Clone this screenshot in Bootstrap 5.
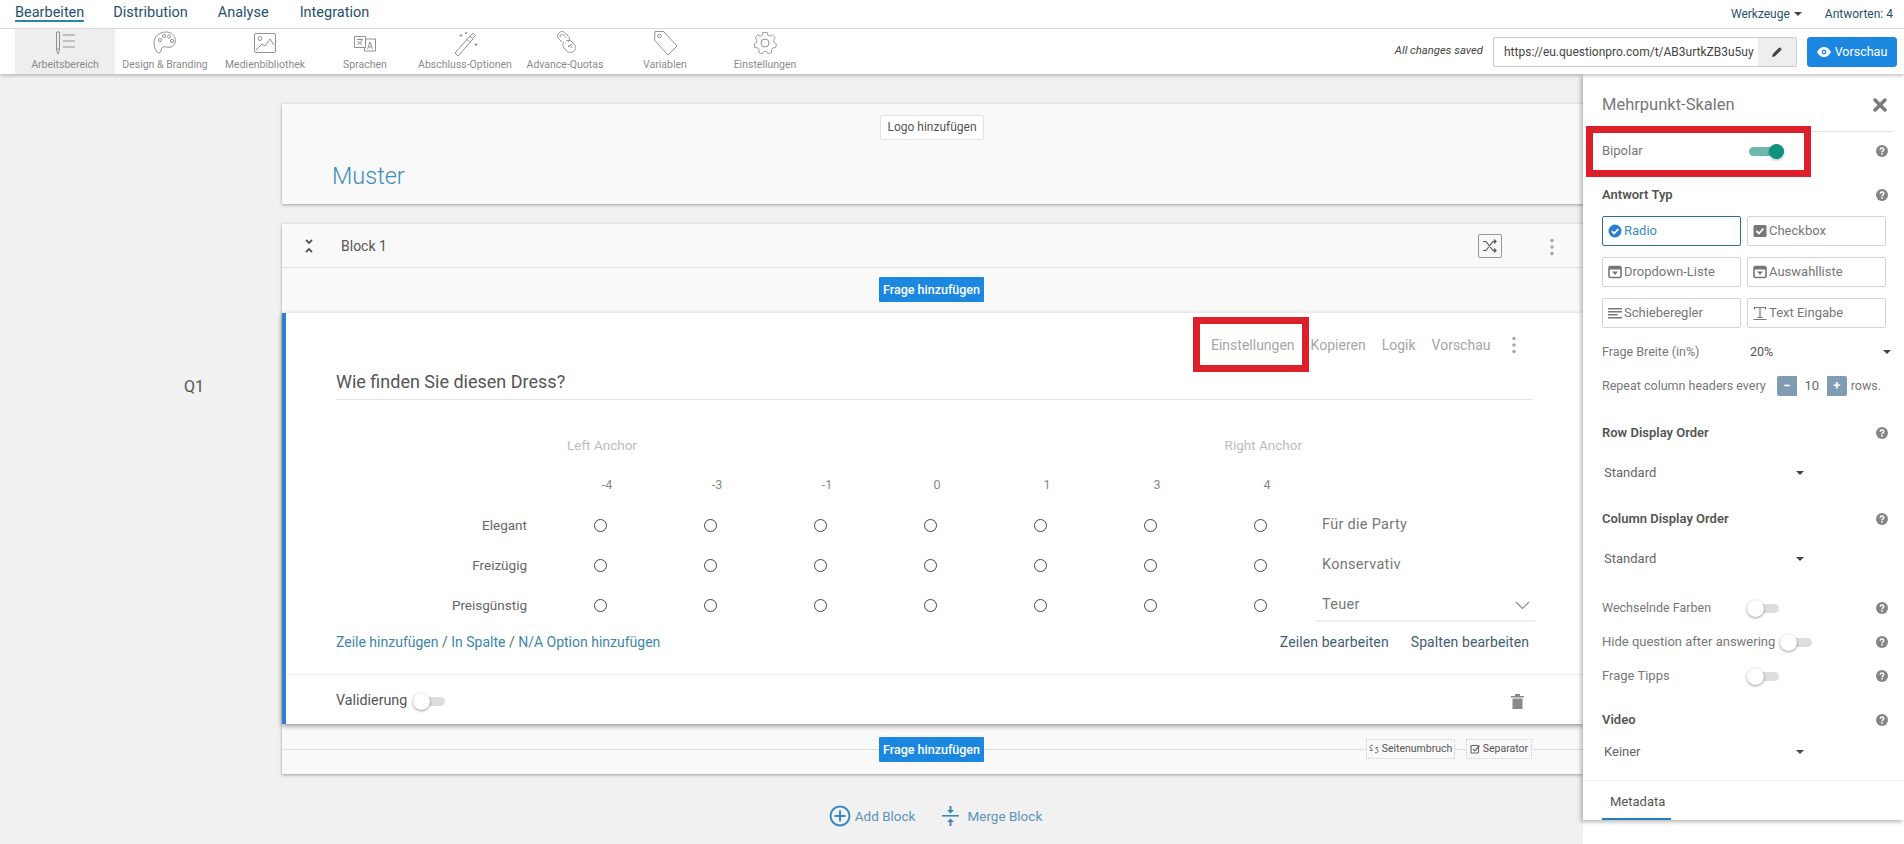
<!DOCTYPE html>
<html lang="de">
<head>
    <meta charset="UTF-8">
    <meta name="viewport" content="width=device-width, initial-scale=1.0">
    <title>Mehrpunkt-Skalen</title>
    <link rel="stylesheet" href="https://cdn.jsdelivr.net/npm/bootstrap@5.3.0/dist/css/bootstrap.min.css">
    <style>
        body {
            font-family: Roboto, "Liberation Sans", sans-serif;
            font-size: 14px;
            color: #555;
            background: #f1f1f1;
            height: 844px;
            overflow: hidden;
        }
        a { text-decoration: none; }

        /* top bars */
        .top-tabs { height: 29px; background: #fff; border-bottom: 1px solid #ddd; padding: 0 11px 0 15px; position: relative; z-index: 3; }
        .top-tabs a { color: #28506e; font-size: 14.5px; line-height: 25px; height: 22px; display: block; }
        .top-tabs .tab-on { border-bottom: 2px solid #2a86a8; }
        .tab-gap-a { margin-left: 29px; }
        .tab-gap-b { margin-left: 30px; }
        .tab-gap-c { margin-left: 31px; }
        .top-tabs .tools { font-size: 12px; color: #28506e; height: 27px; }
        .tools-count { margin-left: 23px; }
        .tool-strip { height: 45px; background: #fff; padding: 0 7px 0 15px; box-shadow: 0 2px 3px rgba(0,0,0,.22); position: relative; z-index: 3; }
        .tool-item { width: 100px; height: 45px; text-align: center; color: #8b8b8b; font-size: 10.5px; }
        .tool-item svg { display: block; margin: 0 auto; height: 28px; width: 32px; fill: none; stroke: #929292; stroke-width: 1; }
        .tool-on { background: #eee; }
        .saved-note { font-size: 11.3px; font-style: italic; color: #444; margin-right: 10px; }
        .url-box { width: 304px; height: 30px; border: 1px solid #ccc; border-radius: 2px; margin-right: 10px; font-size: 12px; color: #444; background: #fff; overflow: hidden; }
        .url-box .url-text { width: 265px; padding-left: 10px; white-space: nowrap; overflow: hidden; }
        .url-box .url-pen { width: 38px; height: 100%; background: #eee; }
        .preview-btn { width: 90px; height: 30px; padding: 0; font-size: 12.5px; line-height: 28px; border-radius: 3px; background: #1c87df; border-color: #1c87df; }

        /* canvas */
        .work-row { height: 771px; }
        .canvas { width: 1583px; flex: none; }
        .gutter { width: 282px; flex: none; padding-top: 302px; padding-left: 184px; font-size: 16px; color: #555; line-height: 22px; }
        .cards { width: 1301px; flex: none; padding-top: 30px; }
        .head-card { height: 100px; background: #f9f9f9; box-shadow: 0 1px 3px rgba(0,0,0,.35); padding-top: 11px; margin-bottom: 20px; }
        .logo-btn { display: block; width: 104px; height: 25px; padding: 0; margin-left: 598px; background: #fff; border: 1px solid #e2e2e2; border-radius: 2px; font-size: 12px; line-height: 23px; color: #555; }
        .survey-name { font-size: 23.5px; font-weight: 300; color: #3d8dbd; margin: 21px 0 0 50px; line-height: 30px; }
        .block-card { background: #f9f9f9; box-shadow: 0 1px 3px rgba(0,0,0,.35); }
        .block-head { height: 44px; border-bottom: 1px solid #ddd; padding: 0 0 0 21px; position: relative; }
        .block-title { margin-left: 26px; padding-top: 2px; color: #555; font-size: 14px; }
        .shuffle-box { width: 24px; height: 24px; border: 1px solid #999; border-radius: 2px; position: absolute; left: 1196px; top: 10px; }
        .dots-v { width: 4px; height: 18px; flex: none; }
        .block-head .dots-v { position: absolute; left: 1268px; top: 14px; }
        .add-row { height: 45px; padding-top: 9px; }
        .add-btn { display: block; width: 105px; height: 25px; padding: 0; margin-left: 597px; background: #1c87df; border: 0; border-radius: 1px; color: #fff; font-size: 12.5px; font-weight: 500; line-height: 25px; }
        .add-btn:hover { background: #1c87df; color: #fff; }

        .question-card { height: 411px; background: #fff; border-left: 4px solid #2f80cc; box-shadow: 0 2px 5px rgba(0,0,0,.4); position: relative; z-index: 1; }
        .question-actions { height: 58px; padding: 23px 0 0 925px; color: #a6a6a6; font-size: 14px; line-height: 18px; }
        .question-actions span { margin-right: 16px; }
        .question-actions .dots-v { margin: 0 0 0 6px; }
        .red-frame { position: absolute; border: 7px solid #dc1f2b; pointer-events: none; z-index: 4; }
        .frame-settings { left: 907px; top: 4px; width: 116px; height: 55px; }
        .frame-bipolar { left: 3px; top: 52px; width: 225px; height: 51px; }
        .question-title { margin: 0 50px; padding-bottom: 6px; height: 22px; box-sizing: content-box; border-bottom: 1px solid #e4e4e4; font-size: 18px; line-height: 22px; color: #555; }
        .scale-grid { display: grid; grid-template-columns: 209px repeat(7, 110px) 220px; margin-left: 50px; margin-top: 35px; align-items: start; }
        .anchor-cell { font-size: 13.500px; color: #bcbcbc; line-height: 20px; height: 40px; }
        .anchor-left { grid-column: 2 / span 2; padding-left: 22px; }
        .anchor-right { grid-column: 7 / span 2; text-align: right; padding-right: 13px; }
        .num-cell { font-size: 12.5px; color: #888; text-align: center; padding-left: 14px; height: 30px; line-height: 20px; }
        .row-label { text-align: right; padding-right: 18px; height: 40px; line-height: 40px; font-size: 13.5px; color: #666; }
        .radio-cell { height: 40px; display: flex; justify-content: center; align-items: center; }
        .radio-cell .form-check-input { width: 13px; height: 13px; margin: 0; border: 1px solid #444; }
        .right-label { padding-left: 7px; height: 40px; line-height: 40px; font-size: 14.5px; letter-spacing: .3px; color: #777; }
        .right-last { width: 220px; border-bottom: 2px solid #eee; height: 37px; padding-top: 5px; padding-right: 5px; line-height: 24px; display: flex; justify-content: space-between; align-items: center; }
        .edit-row { margin: 5px 54px 0 50px; height: 24px; line-height: 24px; font-size: 14px; }
        .edit-row .add-links { color: #3e86a8; }
        .edit-row .add-links b { color: #666; font-weight: 400; }
        .edit-row .edit-links { color: #3f5d75; gap: 22px; letter-spacing: .1px; }
        .question-foot { border-top: 1px solid #f0f0f0; margin-top: 20px; height: 50px; padding: 3px 59px 0 50px; font-size: 14.3px; color: #555; }
        .valid-label { margin-right: 6px; }
        .switch-off, .switch-on { display: inline-block; width: 32px; height: 9px; border-radius: 5px; position: relative; flex: none; }
        .switch-off { background: linear-gradient(90deg, transparent 8px, #ddd 8px); }
        .switch-off::after { content: ""; position: absolute; left: 0; top: -4px; width: 17px; height: 17px; border-radius: 50%; background: #fff; box-shadow: 0 1px 3px rgba(0,0,0,.4); }
        .switch-on { background: #6db9ab; width: 35px; }
        .switch-on::after { content: ""; position: absolute; right: 0; top: -3px; width: 15px; height: 15px; border-radius: 50%; background: #10907e; box-shadow: 0 1px 3px rgba(0,0,0,.3); }
        .foot-row { height: 50px; position: relative; padding-top: 13px; }
        .foot-row::before { content: ""; position: absolute; left: 0; right: 0; top: 25px; border-top: 1px solid #ddd; }
        .foot-row .add-btn { position: relative; }
        .break-tag { position: absolute; top: 15px; height: 20px; background: #f9f9f9; border: 1px dotted #ccc; font-size: 10.5px; color: #555; gap: 3px; }
        .tag-page { left: 1084px; width: 89px; }
        .tag-sep { left: 1184px; width: 66px; }
        .block-links { height: 40px; margin-top: 22px; padding-left: 6px; color: #5d93b8; font-size: 13.5px; gap: 27px; }

        /* right panel */
        .side-panel { width: 321px; flex: none; background: #fff; position: relative; z-index: 2; }
        .side-inner { height: 746px; padding: 0 18px 0 19px; box-shadow: -2px 2px 4px rgba(0,0,0,.28); position: relative; background: #fff; font-size: 13px; color: #777; }
        .side-title { height: 58px; border-bottom: 1px solid #e2e2e2; margin-right: -6px; padding-top: 20px; font-size: 16.5px; line-height: 22px; color: #777; }
        .close-mark { margin-right: 5px; }
        .opt-row { display: flex; align-items: center; position: relative; height: 20px; }
        .help-mark { width: 12px; height: 12px; flex: none; margin-left: auto; margin-right: -2px; }
        .opt-title { font-weight: 600; color: #555; }
        .type-grid { display: grid; grid-template-columns: 139px 139px; column-gap: 6px; row-gap: 11px; margin-top: 11px; }
        .type-btn { height: 30px; padding: 0 5px; display: flex; align-items: center; gap: 2px; border: 1px solid #d4d4d4; border-radius: 2px; background: #fff; font-size: 13px; color: #777; text-align: left; }
        .type-btn svg { width: 14px; height: 14px; flex: none; }
        .type-on { border-color: #2f6f96; color: #3d8dbd; }
        .pick-row { padding-left: 2px; font-size: 13px; color: #666; }
        .pick-row .caret-mark { position: absolute; left: 194px; top: 8px; }
        .caret-mark { width: 0; height: 0; border-left: 4px solid transparent; border-right: 4px solid transparent; border-top: 4px solid #444; }
        .caret-end { margin-left: auto; margin-right: -5px; }
        .width-value { position: absolute; left: 148px; color: #555; }
        .narrow-text { font-size: 12.5px; }
        .repeat-row { font-size: 12.5px; white-space: nowrap; }
        .step-box { width: 70px; height: 20px; margin-left: 11px; border-radius: 2px; overflow: hidden; }
        .step-box span { display: block; text-align: center; line-height: 20px; font-size: 13px; }
        .step-btn { width: 20px; background: #7f9cb3; color: #fff; font-weight: 700; }
        .step-val { flex: 1; background: #fff; color: #666; }
        .sw-pos { position: absolute; top: 6px; }
        .sw-on-pos { left: 147px; }
        .sw-a { left: 145px; }
        .sw-b { left: 178px; }
        .meta-tab { position: absolute; left: 19px; bottom: 0; width: 69px; height: 38px; border-bottom: 2px solid #2a7db8; padding: 12px 0 0 8px; font-size: 13px; color: #555; line-height: 16px; }
        .meta-line { position: absolute; left: 0; right: 0; bottom: 39px; border-top: 1px solid #f2f2f2; }
        .gap-7 { margin-top: 9px; }
        .gap-12 { margin-top: 12px; }
        .gap-14 { margin-top: 14px; }
        .gap-20 { margin-top: 20px; }
        .gap-24 { margin-top: 24px; }
        .gap-26 { margin-top: 26px; }
        .gap-27 { margin-top: 27px; }
        .gap-29 { margin-top: 29px; }
    </style>
</head>
<body>
    <svg class="d-none" xmlns="http://www.w3.org/2000/svg">
        <symbol id="ic-help" viewBox="0 0 12 12">
            <circle cx="6" cy="6" r="6" fill="#858585"/>
            <path d="M4.2 4.7C4.2 3.6 5 3 6 3s1.8.6 1.8 1.6C7.8 5.9 6 5.8 6 7.2" fill="none" stroke="#fff" stroke-width="1.4"/>
            <rect x="5.2" y="8" width="1.6" height="1.5" fill="#fff"/>
        </symbol>
        <symbol id="ic-dots" viewBox="0 0 4 18">
            <circle cx="2" cy="2.5" r="1.8" fill="#aaa"/><circle cx="2" cy="9" r="1.8" fill="#aaa"/><circle cx="2" cy="15.5" r="1.8" fill="#aaa"/>
        </symbol>
        <symbol id="ic-drop" viewBox="0 0 14 14">
            <rect x="1" y="1.5" width="12" height="11" rx="1.5" fill="none" stroke="#777" stroke-width="1.6"/>
            <rect x="1" y="1.5" width="12" height="3" fill="#777"/>
            <path d="M4 6.5h6L7 10z" fill="#777"/>
        </symbol>
    </svg>

    <div class="top-tabs d-flex align-items-start">
        <a href="#" class="tab-on">Bearbeiten</a>
        <a href="#" class="tab-gap-a">Distribution</a>
        <a href="#" class="tab-gap-b">Analyse</a>
        <a href="#" class="tab-gap-c">Integration</a>
        <div class="ms-auto d-flex align-items-center tools">
            <span class="d-flex align-items-center">Werkzeuge<i class="caret-mark ms-1"></i></span>
            <span class="tools-count">Antworten: 4</span>
        </div>
    </div>

    <div class="tool-strip d-flex align-items-center">
        <div class="tool-item tool-on">
            <svg viewBox="0 0 32 28"><path d="M7.500 3h3v18l-1.500 4-1.500-4zM7.500 20h3M14 6h12M14 12h12M14 18h12"/></svg>
            Arbeitsbereich
        </div>
        <div class="tool-item">
            <svg viewBox="0 0 32 28"><path d="M17 3C10 3 5 8 5 14c0 4 2 10 5 10 3 0 1-5 4-6 3-1 5 1 8 0 4-2 5-5 4-9-1-4-5-6-9-6z"/><circle cx="11" cy="11" r="1.600"/><circle cx="15" cy="7" r="1.600"/><circle cx="20" cy="7.500" r="1.600"/><circle cx="23" cy="12" r="1.600"/></svg>
            Design &amp; Branding
        </div>
        <div class="tool-item">
            <svg viewBox="0 0 32 28"><rect x="5.500" y="4.500" width="21" height="19" rx="1.500"/><circle cx="11" cy="9.500" r="2"/><path d="M7 21l6-6 3 2 5-7 4 6"/></svg>
            Medienbibliothek
        </div>
        <div class="tool-item">
            <svg viewBox="0 0 32 28"><path d="M5.500 7.500h11v11h-11zM16.500 10h10v12h-11v-3.500"/><path d="M8 10.500h6M11 9v1.500M13 10.500c-.5 2.500-2 4-4.500 5M9 12c.5 1.500 2.500 3 4 3.500"/><path d="M18.500 20l2.500-7 2.500 7M19.500 18h3"/></svg>
            Sprachen
        </div>
        <div class="tool-item">
            <svg viewBox="0 0 32 28"><path d="M6 24l15-17 3 3-15 17zM18 10.500l3 3M21 7l3-3 2.500 2.500-3 3"/><path d="M12 5v3M10.500 6.500h3M27 14v3M25.500 15.500h3M17 3v2M16 4h2"/></svg>
            Abschluss-Optionen
        </div>
        <div class="tool-item">
            <svg viewBox="0 0 32 28"><path d="M13 13l-3-3c-2-2-2-4 0-6s4-2 6 0l3 3c2 2 2 4 0 6"/><path d="M12 8c-1-1-1-2 0-2.500 1-.5 2 0 3 1l2 2"/><path d="M17 12c2-1 4-1 5 0l3 3c2 2 2 5 0 7s-5 2-7 0l-3-3c-1.500-2-1.500-4 0-6"/><path d="M19 18l4-3M23 19c0-2-2-3-4-2"/></svg>
            Advance-Quotas
        </div>
        <div class="tool-item">
            <svg viewBox="0 0 32 28"><path d="M6 2.500h8.500L28 17l-9 9L5.500 11z"/><circle cx="10.500" cy="7" r="1.800"/></svg>
            Variablen
        </div>
        <div class="tool-item">
            <svg viewBox="0 0 32 28"><circle cx="16" cy="14" r="4"/><path d="M13.500 2.500h5l.8 3.200 2.500 1.100 2.900-1.600 3 3.500-1.900 2.700.5 2.600 2.700 1.500-.9 4.300-3.200.2-1.700 2.100.5 3.200-4.100 1.500-1.900-2.600h-2.800l-1.900 2.600-4.100-1.500.5-3.200-1.700-2.100-3.200-.2-.9-4.300 2.700-1.500.5-2.600-1.900-2.700 3-3.500 2.900 1.600 2.500-1.100z" transform="translate(16 14) scale(.88) translate(-16 -14.500)"/></svg>
            Einstellungen
        </div>
        <div class="ms-auto d-flex align-items-center">
            <span class="saved-note">All changes saved</span>
            <div class="url-box d-flex align-items-center">
                <span class="url-text">https://eu.questionpro.com/t/AB3urtkZB3u5uy</span>
                <span class="url-pen d-flex align-items-center justify-content-center">
                    <svg width="12" height="12" viewBox="0 0 12 12"><path d="M1 11l.8-3L8 1.800a1 1 0 0 1 1.400 0l.8.8a1 1 0 0 1 0 1.400L4 10.200z" fill="#444"/></svg>
                </span>
            </div>
            <button class="btn btn-primary preview-btn d-flex align-items-center justify-content-center gap-1">
                <svg width="14" height="10" viewBox="0 0 14 10"><path d="M7 0C4 0 1.500 2 0 5c1.500 3 4 5 7 5s5.500-2 7-5c-1.500-3-4-5-7-5z" fill="#fff"/><circle cx="7" cy="5" r="2.400" fill="#1c87df"/><circle cx="7" cy="5" r="1.200" fill="#fff"/></svg>
                Vorschau
            </button>
        </div>
    </div>

    <div class="work-row d-flex">
        <div class="canvas d-flex">
            <div class="gutter">Q1</div>
            <div class="cards">
                <div class="head-card">
                    <button class="btn logo-btn">Logo hinzufügen</button>
                    <div class="survey-name">Muster</div>
                </div>
                <div class="block-card">
                    <div class="block-head d-flex align-items-center">
                        <svg width="12" height="14" viewBox="0 0 12 14" fill="none" stroke="#555" stroke-width="1.800"><path d="M3 1l3 3 3-3M3 13l3-3 3 3"/></svg>
                        <span class="block-title">Block 1</span>
                        <span class="shuffle-box d-flex align-items-center justify-content-center">
                            <svg width="16" height="14" viewBox="0 0 16 14" fill="none" stroke="#555" stroke-width="1.200"><path d="M1 2.500h3l7 9h3M1 11.500h3l7-9h3M12 .500l2 2-2 2M12 9.500l2 2-2 2"/></svg>
                        </span>
                        <svg class="dots-v"><use href="#ic-dots"/></svg>
                    </div>
                    <div class="add-row"><button class="btn add-btn">Frage hinzufügen</button></div>

                    <div class="question-card">
                        <div class="red-frame frame-settings"></div>
                        <div class="question-actions d-flex align-items-start">
                            <span>Einstellungen</span><span>Kopieren</span><span>Logik</span><span>Vorschau</span>
                            <svg class="dots-v"><use href="#ic-dots"/></svg>
                        </div>
                        <div class="question-title">Wie finden Sie diesen Dress?</div>
                        <div class="scale-grid" id="scaleGrid"></div>
                        <div class="edit-row d-flex justify-content-between">
                            <span class="add-links">Zeile hinzufügen <b>/</b> In Spalte <b>/</b> N/A Option hinzufügen</span>
                            <span class="edit-links d-flex"><span>Zeilen bearbeiten</span><span>Spalten bearbeiten</span></span>
                        </div>
                        <div class="question-foot d-flex align-items-center">
                            <span class="valid-label">Validierung</span>
                            <span class="switch-off"></span>
                            <svg class="ms-auto" width="13" height="15" viewBox="0 0 13 15"><path d="M0 2h13v1.500H0zM4 0h5v2H4zM1.500 4.500h10V15h-10z" fill="#8a8a8a"/></svg>
                        </div>
                    </div>

                    <div class="foot-row">
                        <button class="btn add-btn">Frage hinzufügen</button>
                        <span class="break-tag tag-page d-flex align-items-center justify-content-center">
                            <svg width="10" height="10" viewBox="0 0 10 10" fill="none" stroke="#666" stroke-width="1"><path d="M4 1.500L2.500 1 1 2.500 1.500 4 4 6.500M6 8.500l1.500.5L9 7.500 8.500 6 6 3.500M1 6.500h2M7 3.500h2"/></svg>
                            Seitenumbruch
                        </span>
                        <span class="break-tag tag-sep d-flex align-items-center justify-content-center">
                            <svg width="10" height="10" viewBox="0 0 10 10" fill="none" stroke="#666" stroke-width="1.200"><rect x="1" y="1.500" width="7.500" height="7.500" rx="1"/><path d="M3 5l1.800 1.800L9.500 1.500"/></svg>
                            Separator
                        </span>
                    </div>
                </div>
                <div class="block-links d-flex align-items-center justify-content-center">
                    <span class="d-flex align-items-center gap-1">
                        <svg width="22" height="22" viewBox="0 0 22 22" fill="none" stroke="#3d88bd" stroke-width="2"><circle cx="11" cy="11" r="9.500"/><path d="M11 5.500v11M5.500 11h11"/></svg>
                        Add Block
                    </span>
                    <span class="d-flex align-items-center gap-2">
                        <svg width="17" height="22" viewBox="0 0 17 22" fill="#3d88bd"><rect y="10" width="17" height="1.600"/><path d="M7.500 1h2v4h2.500l-3.500 3.500L5 5h2.500zM7.500 21v-4H5l3.500-3.500L12 17H9.500v4z"/></svg>
                        Merge Block
                    </span>
                </div>
            </div>
        </div>

        <div class="side-panel">
            <div class="side-inner">
                <div class="red-frame frame-bipolar"></div>
                <div class="side-title d-flex justify-content-between">
                    Mehrpunkt-Skalen
                    <svg class="mt-1 close-mark" width="14" height="14" viewBox="0 0 14 14"><path d="M2 2l10 10M12 2L2 12" stroke="#7a7a7a" stroke-width="3.400" stroke-linecap="round"/></svg>
                </div>
                <div class="opt-row gap-7">
                    Bipolar
                    <span class="switch-on sw-pos sw-on-pos"></span>
                    <svg class="help-mark"><use href="#ic-help"/></svg>
                </div>
                <div class="opt-row opt-title gap-24">
                    Antwort Typ
                    <svg class="help-mark"><use href="#ic-help"/></svg>
                </div>
                <div class="type-grid">
                    <button class="btn type-btn type-on">
                        <svg viewBox="0 0 14 14"><circle cx="7" cy="7" r="6.500" fill="#2a7fd0"/><path d="M3.800 7.200l2.300 2.300 4.200-4.500" fill="none" stroke="#fff" stroke-width="1.800"/></svg>Radio
                    </button>
                    <button class="btn type-btn">
                        <svg viewBox="0 0 14 14"><rect x=".500" y="1" width="13" height="12" rx="1.500" fill="#777"/><path d="M3.500 7l2.500 2.500 4.500-5" fill="none" stroke="#fff" stroke-width="1.800"/></svg>Checkbox
                    </button>
                    <button class="btn type-btn"><svg><use href="#ic-drop"/></svg>Dropdown-Liste</button>
                    <button class="btn type-btn"><svg><use href="#ic-drop"/></svg>Auswahlliste</button>
                    <button class="btn type-btn">
                        <svg viewBox="0 0 14 14"><path d="M0 2h14v1.600H0zM0 5h14v1.600H0zM0 8h9.500v1.600H0zM0 11h14v1.600H0z" fill="#777"/></svg>Schieberegler
                    </button>
                    <button class="btn type-btn">
                        <svg viewBox="0 0 14 14" fill="none" stroke="#777" stroke-width="1.200"><path d="M1.500 3.500V1.500h11v2M7 1.500v10M4.500 11.500h5M.500 13.500h13"/></svg>Text Eingabe
                    </button>
                </div>
                <div class="opt-row narrow-text gap-14">
                    Frage Breite (in%)
                    <span class="width-value">20%</span>
                    <i class="caret-mark caret-end"></i>
                </div>
                <div class="opt-row repeat-row gap-14">
                    Repeat column headers every
                    <span class="step-box d-flex"><span class="step-btn">−</span><span class="step-val">10</span><span class="step-btn">+</span></span>
                    <span class="ms-1">rows.</span>
                </div>
                <div class="opt-row opt-title gap-27">
                    Row Display Order
                    <svg class="help-mark"><use href="#ic-help"/></svg>
                </div>
                <div class="opt-row pick-row gap-20">Standard<i class="caret-mark"></i></div>
                <div class="opt-row opt-title gap-26">
                    Column Display Order
                    <svg class="help-mark"><use href="#ic-help"/></svg>
                </div>
                <div class="opt-row pick-row gap-20">Standard<i class="caret-mark"></i></div>
                <div class="opt-row narrow-text gap-29">
                    Wechselnde Farben
                    <span class="switch-off sw-pos sw-a"></span>
                    <svg class="help-mark"><use href="#ic-help"/></svg>
                </div>
                <div class="opt-row gap-14">
                    Hide question after answering
                    <span class="switch-off sw-pos sw-b"></span>
                    <svg class="help-mark"><use href="#ic-help"/></svg>
                </div>
                <div class="opt-row gap-14">
                    Frage Tipps
                    <span class="switch-off sw-pos sw-a"></span>
                    <svg class="help-mark"><use href="#ic-help"/></svg>
                </div>
                <div class="opt-row opt-title gap-24">
                    Video
                    <svg class="help-mark"><use href="#ic-help"/></svg>
                </div>
                <div class="opt-row pick-row gap-12">Keiner<i class="caret-mark"></i></div>
                <div class="meta-line"></div>
                <div class="meta-tab">Metadata</div>
            </div>
        </div>
    </div>

    <script src="https://cdn.jsdelivr.net/npm/bootstrap@5.3.0/dist/js/bootstrap.bundle.min.js"></script>
    <script>
        // scale table is just repeated cells, build it from data
        const scale = ['-4', '-3', '-1', '0', '1', '3', '4'];
        const rows = [['Elegant', 'Für die Party'], ['Freizügig', 'Konservativ'], ['Preisgünstig', 'Teuer']];
        let html = '<div class="anchor-cell"></div><div class="anchor-cell anchor-left">Left Anchor</div>';
        html += '<div class="anchor-cell anchor-right">Right Anchor</div><div class="anchor-cell"></div>';
        html += '<div></div>' + scale.map(n => `<div class="num-cell">${n}</div>`).join('') + '<div></div>';
        rows.forEach((row, i) => {
            html += `<div class="row-label">${row[0]}</div>`;
            scale.forEach(() => {
                html += `<div class="radio-cell"><input type="radio" class="form-check-input" name="q${i}" aria-label="${row[0]}"></div>`;
            });
            if (i === 2) {
                html += `<div class="right-label right-last"><span>${row[1]}</span><svg width="15" height="9" viewBox="0 0 15 9" fill="none" stroke="#888" stroke-width="1.200"><path d="M1 1l6.500 6.500L14 1"/></svg></div>`;
            } else {
                html += `<div class="right-label">${row[1]}</div>`;
            }
        });
        document.getElementById('scaleGrid').innerHTML = html;
    </script>
</body>
</html>
